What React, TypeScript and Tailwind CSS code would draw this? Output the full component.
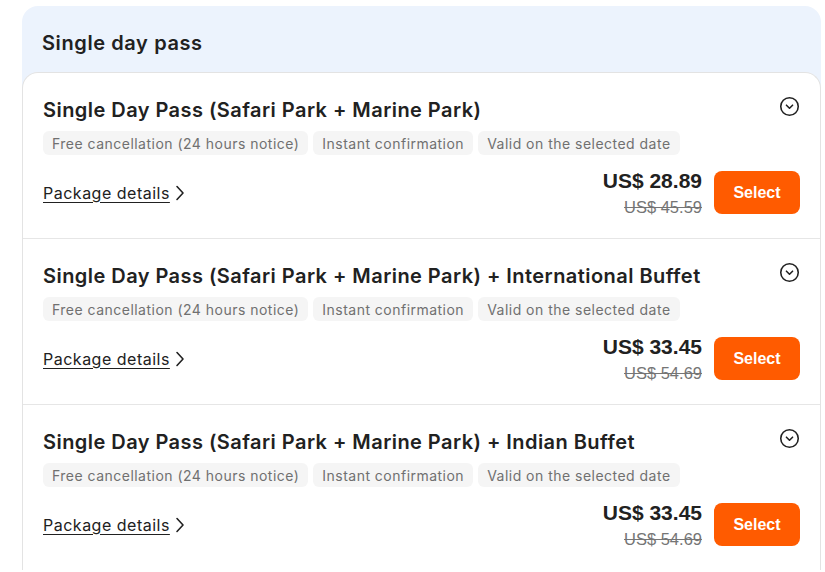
import React from 'react';

interface PackageItem {
  id: number;
  title: string;
  price: string;
  original: string;
}

const packages: PackageItem[] = [
  { id: 1, title: 'Single Day Pass (Safari Park + Marine Park)', price: 'US$ 28.89', original: 'US$ 45.59' },
  { id: 2, title: 'Single Day Pass (Safari Park + Marine Park) + International Buffet', price: 'US$ 33.45', original: 'US$ 54.69' },
  { id: 3, title: 'Single Day Pass (Safari Park + Marine Park) + Indian Buffet', price: 'US$ 33.45', original: 'US$ 54.69' },
];

const tags = ['Free cancellation (24 hours notice)', 'Instant confirmation', 'Valid on the selected date'];

function ChevronCircle() {
  return (
    <svg width="21" height="21" viewBox="0 0 24 24" fill="none" stroke="#212121" strokeWidth="1.8" strokeLinecap="round" strokeLinejoin="round">
      <circle cx="12" cy="12" r="10" />
      <path d="M8.5 10.5l3.5 3.5 3.5-3.5" />
    </svg>
  );
}

function ChevronRight() {
  return (
    <svg width="14" height="18" viewBox="0 0 14 18" fill="none" stroke="#212121" strokeWidth="1.6" strokeLinecap="round" strokeLinejoin="round">
      <path d="M4 2.5l6 6.5-6 6.5" />
    </svg>
  );
}

function PackageRow({ item, last }: { item: PackageItem; last: boolean }) {
  return (
    <div className={`px-5 pt-[22px] pb-6 ${last ? '' : 'border-b border-[#e6e6e6]'}`}>
      <div className="flex items-start justify-between">
        <h3 className="text-[20px] leading-[28px] font-semibold text-[#212121] tracking-[0.45px] mt-[1px]">{item.title}</h3>
        <div className="mt-[1px]">
          <ChevronCircle />
        </div>
      </div>
      <div className="mt-[7px] flex gap-[5px]">
        {tags.map(t => (
          <span key={t} className="rounded-md bg-[#f5f5f5] px-[9px] h-6 flex items-center text-[14px] tracking-[0.48px] text-[#707070]">
            {t}
          </span>
        ))}
      </div>
      <div className="mt-4 flex items-center justify-between">
        <a className="flex items-center gap-[3px] text-[16px] tracking-[0.5px] text-[#212121] underline underline-offset-[3px] decoration-1">
          Package details
          <span className="no-underline inline-flex"><ChevronRight /></span>
        </a>
        <div className="flex items-center gap-3">
          <div className="-my-[3px] flex flex-col items-end font-['Liberation_Sans',Arial,sans-serif]">
            <span className="text-[21px] leading-6 font-bold text-[#212121]">{item.price}</span>
            <span className="mt-[4px] text-[16.5px] leading-5 text-[#757575] line-through">{item.original}</span>
          </div>
          <button className="h-[43px] w-[86px] rounded-lg bg-[#ff5b00] text-white text-[16px] font-bold font-['Liberation_Sans',Arial,sans-serif]">
            Select
          </button>
        </div>
      </div>
    </div>
  );
}

export default function App() {
  return (
    <div className="bg-white min-h-screen pt-[6px] pl-[22px] pr-[4px] font-['Inter','Noto_Sans',sans-serif]">
      <div className="rounded-t-2xl bg-[#ecf3fd]">
        <h2 className="px-5 pt-[24px] pb-[16px] text-[20px] leading-[26px] font-semibold tracking-[0.6px] text-[#212121]">Single day pass</h2>
        <div className="rounded-t-2xl border border-b-0 border-[#e3e3e3] bg-white">
          {packages.map((p, i) => (
            <PackageRow key={p.id} item={p} last={i === packages.length - 1} />
          ))}
        </div>
      </div>
    </div>
  );
}
